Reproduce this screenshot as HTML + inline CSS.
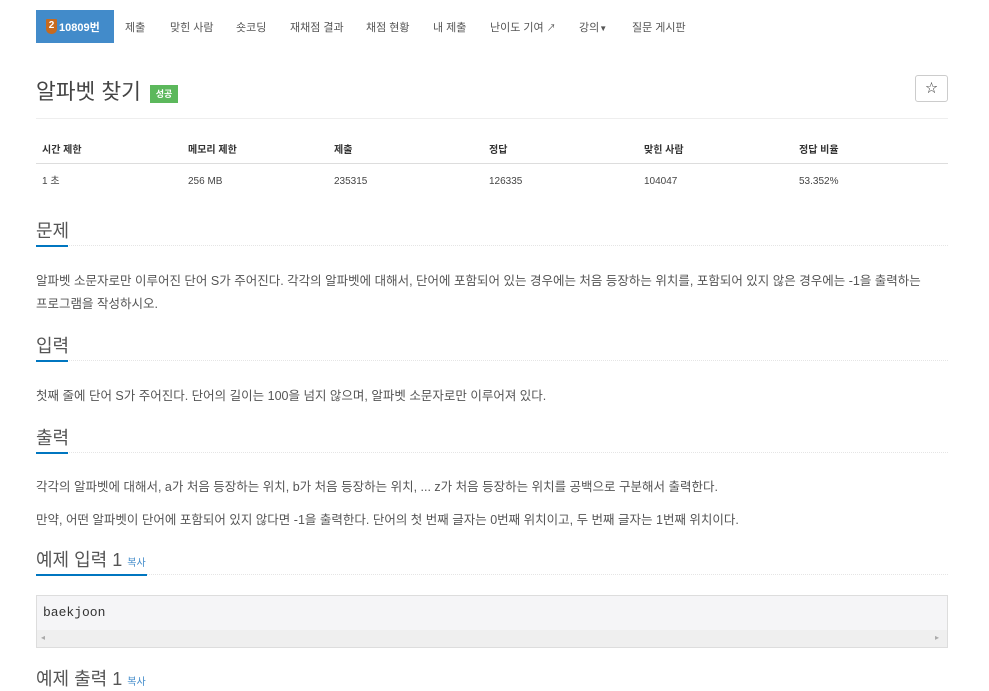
<!DOCTYPE html>
<html><head><meta charset="utf-8"><style>
*{box-sizing:border-box}
body{margin:0;background:#fff;font-family:"Liberation Sans","Noto Sans CJK KR",sans-serif;color:#333;width:989px;height:676px;overflow:hidden;position:relative}
.a{position:absolute;white-space:nowrap;line-height:1.2}
.t{margin-top:3px}
.nav{font-size:11px;color:#555;top:19px}
.h{font-size:18px;color:#555}
.ul{position:absolute;height:1px;border-top:1px dotted #e5e5e5}
.bl{position:absolute;height:2px;background:#0076c0}
.p{font-size:12.5px;color:#555}
.th{font-size:10px;font-weight:bold;color:#333;top:142px}
.td{font-size:10px;color:#444;top:172px;line-height:14px}
</style></head><body>
<div class="a" style="left:36px;top:10px;width:78px;height:33px;background:#428bca"></div>
<div class="a" style="left:46px;top:19px;width:11px;height:15px;background:#c66a1f;border-radius:1px 1px 5px 5px;color:#fff;font-size:10px;font-weight:bold;text-align:center;line-height:14px">2</div>
<div class="a t" style="left:59px;top:19px;color:#fff;font-size:11px;font-weight:bold">10809번</div>
<div class="a nav t" style="left:125px">제출</div>
<div class="a nav t" style="left:170px">맞힌 사람</div>
<div class="a nav t" style="left:236px">숏코딩</div>
<div class="a nav t" style="left:290px">재채점 결과</div>
<div class="a nav t" style="left:366px">채점 현황</div>
<div class="a nav t" style="left:433px">내 제출</div>
<div class="a nav t" style="left:490px">난이도 기여 <span style="font-size:9px">↗</span></div>
<div class="a nav t" style="left:579px">강의<span style="font-size:8px">▼</span></div>
<div class="a nav t" style="left:632px">질문 게시판</div>
<div class="a" style="left:36px;top:80px;font-size:21.5px;color:#444">알파벳 찾기</div>
<div class="a" style="left:150px;top:85px;width:28px;height:18px;background:#5cb85c;color:#fff;font-size:9px;font-weight:bold;text-align:center;line-height:18px">성공</div>
<div class="a" style="left:915px;top:75px;width:33px;height:27px;border:1px solid #ccc;border-radius:3px;text-align:center;line-height:25px;font-size:12px">☆</div>
<div class="a" style="left:36px;top:118px;width:912px;height:1px;background:#eee"></div>
<div class="a th t" style="left:42px">시간 제한</div>
<div class="a th t" style="left:188px">메모리 제한</div>
<div class="a th t" style="left:334px">제출</div>
<div class="a th t" style="left:489px">정답</div>
<div class="a th t" style="left:644px">맞힌 사람</div>
<div class="a th t" style="left:799px">정답 비율</div>
<div class="a" style="left:36px;top:163px;width:912px;height:1px;background:#ddd"></div>
<div class="a td t" style="left:42px">1 초</div>
<div class="a td t" style="left:188px">256 MB</div>
<div class="a td t" style="left:334px">235315</div>
<div class="a td t" style="left:489px">126335</div>
<div class="a td t" style="left:644px">104047</div>
<div class="a td t" style="left:799px">53.352%</div>

<div class="a h t" style="left:36px;top:218px">문제</div>
<div class="ul" style="left:36px;top:245px;width:912px"></div><div class="bl" style="left:36px;top:245px;width:32px"></div>
<div class="a p t" style="left:36px;top:271px">알파벳 소문자로만 이루어진 단어 S가 주어진다. 각각의 알파벳에 대해서, 단어에 포함되어 있는 경우에는 처음 등장하는 위치를, 포함되어 있지 않은 경우에는 -1을 출력하는</div>
<div class="a p t" style="left:36px;top:294px">프로그램을 작성하시오.</div>

<div class="a h t" style="left:36px;top:333px">입력</div>
<div class="ul" style="left:36px;top:360px;width:912px"></div><div class="bl" style="left:36px;top:360px;width:32px"></div>
<div class="a p t" style="left:36px;top:386px">첫째 줄에 단어 S가 주어진다. 단어의 길이는 100을 넘지 않으며, 알파벳 소문자로만 이루어져 있다.</div>

<div class="a h t" style="left:36px;top:425px">출력</div>
<div class="ul" style="left:36px;top:452px;width:912px"></div><div class="bl" style="left:36px;top:452px;width:32px"></div>
<div class="a p t" style="left:36px;top:477px">각각의 알파벳에 대해서, a가 처음 등장하는 위치, b가 처음 등장하는 위치, ... z가 처음 등장하는 위치를 공백으로 구분해서 출력한다.</div>
<div class="a p t" style="left:36px;top:510px">만약, 어떤 알파벳이 단어에 포함되어 있지 않다면 -1을 출력한다. 단어의 첫 번째 글자는 0번째 위치이고, 두 번째 글자는 1번째 위치이다.</div>

<div class="a h t" style="left:36px;top:547px">예제 입력 1 <span style="font-size:10px;color:#428bca">복사</span></div>
<div class="ul" style="left:36px;top:574px;width:912px"></div><div class="bl" style="left:36px;top:574px;width:111px"></div>
<div class="a" style="left:36px;top:595px;width:912px;height:53px;border:1px solid #ddd;background:#f5f5f7"></div>
<div class="a" style="left:37px;top:630px;width:910px;height:17px;background:#efefef"></div>
<div class="a" style="left:41px;top:633px;font-size:8px;color:#aaa">◂</div>
<div class="a" style="left:935px;top:633px;font-size:8px;color:#aaa">▸</div>
<div class="a" style="left:43px;top:605px;font-family:'Liberation Mono',monospace;font-size:13px;color:#333">baekjoon</div>
<div class="a h t" style="left:36px;top:666px">예제 출력 1 <span style="font-size:10px;color:#428bca">복사</span></div>
</body></html>
